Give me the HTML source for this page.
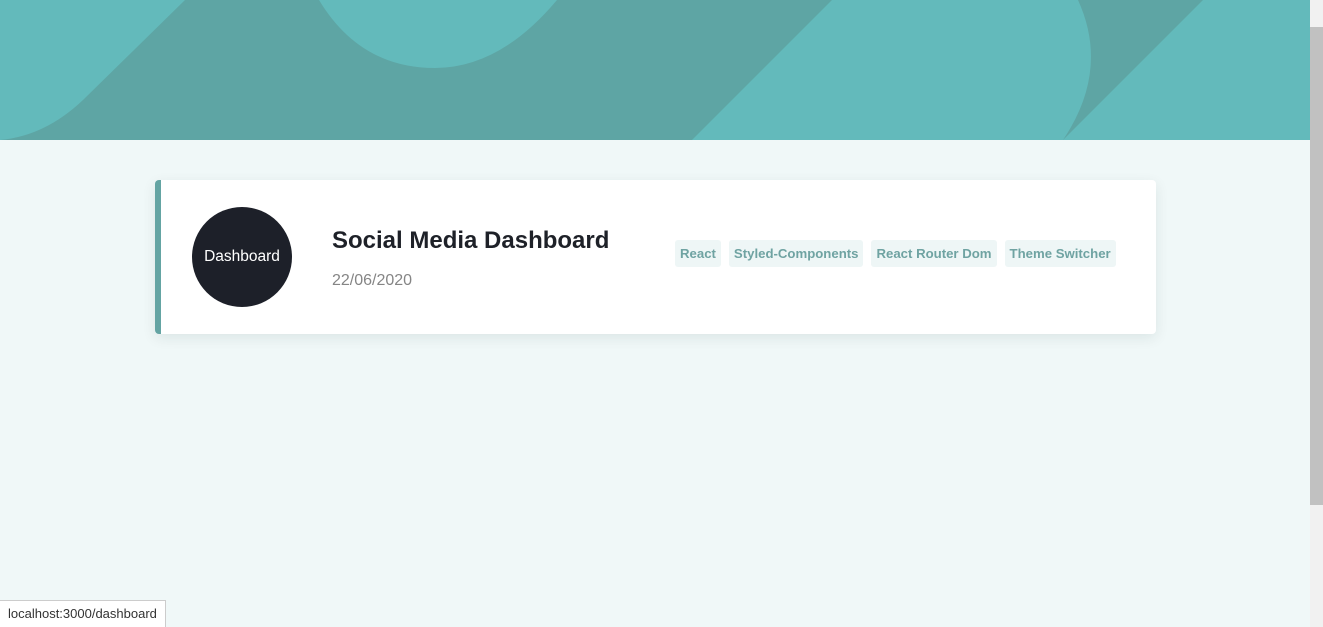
<!DOCTYPE html>
<html><head><style>
body{margin:0;width:1323px;height:627px;overflow:hidden;background:#f0f8f8;font-family:"Liberation Sans",sans-serif;position:relative}
.hdr{position:absolute;left:0;top:0;width:1310px;height:140px}
.card{position:absolute;left:155px;top:180px;width:1001px;height:154px;background:#fff;border-radius:4px;box-shadow:0 4px 14px rgba(0,40,40,.09);border-left:6px solid #64a4a3;box-sizing:border-box}
.circ{position:absolute;left:31px;top:27px;width:100px;height:100px;border-radius:50%;background:#1d2029;color:#fff;font-size:15.5px;line-height:100px;text-align:center}
.t{position:absolute;left:171px;top:47px;font-size:24px;font-weight:bold;color:#1e2128}
.d{position:absolute;left:171px;top:92px;font-size:16px;color:#858585}
.tags{position:absolute;left:514px;top:60px;display:flex;gap:8px}
.tag{background:#eef6f6;color:#6fa3a2;font-weight:bold;font-size:13.2px;padding:5px 5px;border-radius:3px;line-height:17px}
.sb{position:absolute;right:0;top:0;width:13px;height:627px;background:#f1f1f1}
.th{position:absolute;left:0;top:27px;width:13px;height:478px;background:#c1c1c1}
.st{position:absolute;left:0;bottom:0;height:26px;padding:0 8px;background:#fff;border:1px solid #ccc;border-left:none;border-bottom:none;font-size:13px;line-height:26px;color:#333}
</style></head><body>
<svg class="hdr" viewBox="0 0 1310 140">
<rect width="1310" height="140" fill="#63babb"/>
<path d="M185 0 L83 100 Q45 136 0 140 L692 140 L832 0 L557 0 Q500 68 435 68 Q360 68 319 0 Z" fill="#5ea5a4"/>
<path d="M1078 0 Q1110 70 1063 140 L1203 0 Z" fill="#5ea5a4"/>
</svg>
<div class="card">
<div class="circ">Dashboard</div>
<div class="t">Social Media Dashboard</div>
<div class="d">22/06/2020</div>
<div class="tags"><span class="tag">React</span><span class="tag">Styled-Components</span><span class="tag">React Router Dom</span><span class="tag">Theme Switcher</span></div>
</div>
<div class="sb"><div class="th"></div></div>
<div class="st">localhost:3000/dashboard</div>
</body></html>
